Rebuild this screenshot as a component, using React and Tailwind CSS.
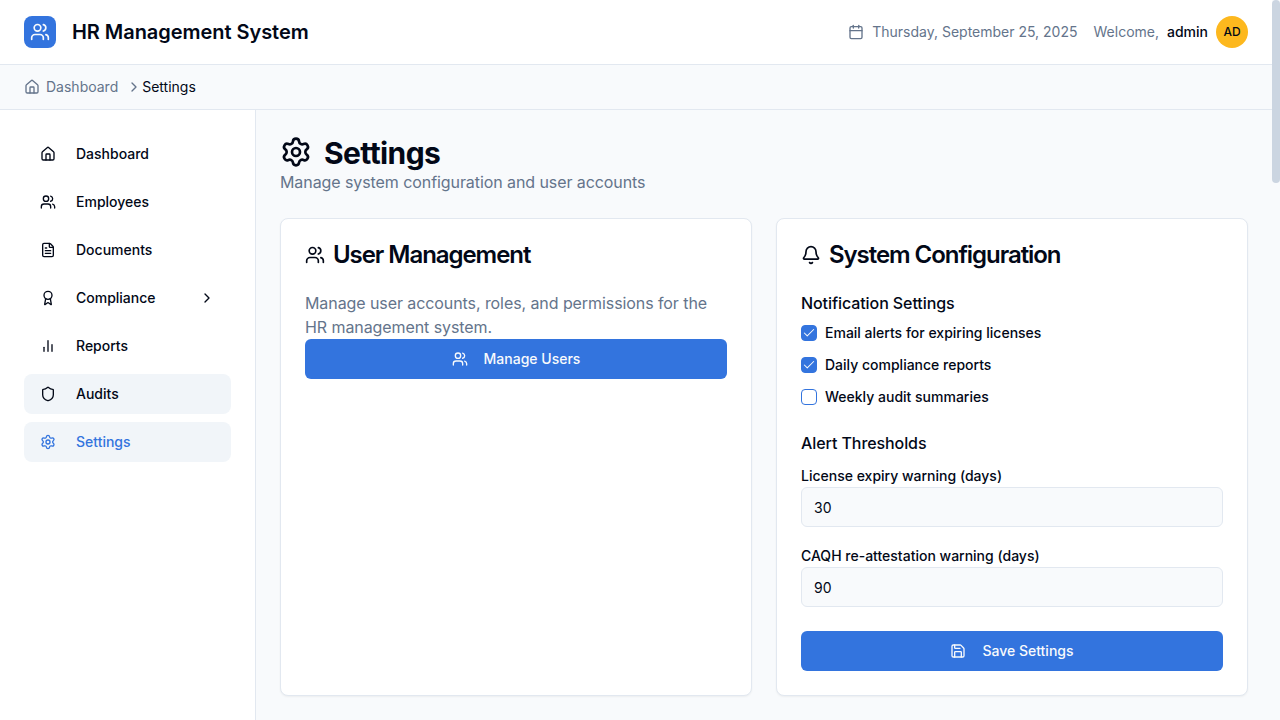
import { Users, House, Calendar, Settings, FileText, Award, Shield, Bell, Save, ChevronRight, Check } from 'lucide-react'

// lucide's current chart icon is wider than the one in the picture
function BarsIcon({ className }) {
  return (
    <svg viewBox="0 0 24 24" fill="none" stroke="currentColor" strokeWidth="2" strokeLinecap="round" strokeLinejoin="round" className={className}>
      <path d="M18 20V10" />
      <path d="M12 20V4" />
      <path d="M6 20v-6" />
    </svg>
  )
}

const navItems = [
  { label: 'Dashboard', icon: House },
  { label: 'Employees', icon: Users },
  { label: 'Documents', icon: FileText },
  { label: 'Compliance', icon: Award, hasChildren: true },
  { label: 'Reports', icon: BarsIcon },
  { label: 'Audits', icon: Shield, hovered: true },
  { label: 'Settings', icon: Settings, active: true },
]

const notifications = [
  { label: 'Email alerts for expiring licenses', checked: true },
  { label: 'Daily compliance reports', checked: true },
  { label: 'Weekly audit summaries', checked: false },
]

function NavItem({ item }) {
  const Icon = item.icon
  return (
    <a
      className={`flex h-10 items-center gap-5 rounded-lg px-4 text-sm font-medium ${
        item.active ? 'bg-[#f1f5f9] text-[#3374de]' : item.hovered ? 'bg-[#f1f5f9] text-[#020817]' : 'text-[#020817]'
      }`}
    >
      <Icon className="h-4 w-4 shrink-0" />
      <span className="flex-1">{item.label}</span>
      {item.hasChildren && <ChevronRight className="h-4 w-4 shrink-0" />}
    </a>
  )
}

function CheckRow({ label, checked }) {
  return (
    <label className="flex h-5 items-center gap-2 text-sm font-medium text-[#020817]">
      <span
        className={`flex h-4 w-4 items-center justify-center rounded border border-[#3374de] ${
          checked ? 'bg-[#3374de] text-[#f8fafc]' : 'bg-white'
        }`}
      >
        {checked && <Check className="h-3.5 w-3.5 shrink-0" strokeWidth={1.75} />}
      </span>
      {label}
    </label>
  )
}

function NumberField({ label, value }) {
  return (
    <div>
      <div className="pt-px text-sm font-medium leading-5 text-[#020817]">{label}</div>
      <input
        readOnly
        value={value}
        className="mt-px h-10 w-full rounded-md border border-[#e2e8f0] bg-[#f8fafc] px-3 text-sm text-[#020817] outline-none"
      />
    </div>
  )
}

export default function App() {
  return (
    <div className="relative h-screen overflow-hidden bg-[#f8fafc] font-['Inter',sans-serif]">
      {/* scrollbar thumb, headless run hides the real one */}
      <div className="absolute top-0 right-0 h-[183px] w-2 rounded-full bg-[#cbd5e1]" />
      <div className="mr-2">
        <header className="flex h-[65px] items-center justify-between border-b border-[#e2e8f0] bg-white px-6">
          <div className="flex items-center gap-4">
            <div className="flex h-8 w-8 items-center justify-center rounded-lg bg-[#3374de] text-[#f8fafc]">
              <Users className="h-5 w-5" />
            </div>
            <h1 className="text-xl font-semibold tracking-[-0.05px] text-[#020817]">HR Management System</h1>
          </div>
          <div className="flex items-center gap-2 text-sm">
            <Calendar className="h-4 w-4 text-[#64748b]" />
            <span className="text-[#64748b]">Thursday, September 25, 2025</span>
            <span className="ml-2 text-[#64748b]">Welcome,</span>
            <span className="font-medium text-[#020817]">admin</span>
            <div className="flex h-8 w-8 items-center justify-center rounded-full bg-[#fdb81e] text-xs font-medium text-[#020817]">
              AD
            </div>
          </div>
        </header>

        <nav className="flex h-[45px] items-center border-b border-[#e2e8f0] bg-[#f8fafc] px-6 text-sm">
          <House className="h-4 w-4 text-[#64748b]" />
          <span className="ml-1.5 text-[#64748b]">Dashboard</span>
          <ChevronRight className="ml-2 h-4 w-4 text-[#64748b]" />
          <span className="text-[#020817]">Settings</span>
        </nav>

        <div className="flex">
          <aside className="min-h-[610px] w-64 shrink-0 border-r border-[#e2e8f0] bg-white p-6">
            <div className="flex flex-col gap-2">
              {navItems.map((item) => (
                <NavItem key={item.label} item={item} />
              ))}
            </div>
          </aside>

          <main className="flex-1 p-6">
            <div className="flex h-9 items-center gap-3">
              <Settings className="h-8 w-8 text-[#020817]" />
              <h2 className="h-9 text-3xl leading-[38px] font-bold tracking-[-0.02em] text-[#020817]">Settings</h2>
            </div>
            <p className="text-base tracking-[-0.08px] text-[#64748b]">Manage system configuration and user accounts</p>

            <div className="mt-6 grid grid-cols-2 gap-6">
              <section className="rounded-lg border border-[#e2e8f0] bg-white p-6 shadow-xs">
                <h3 className="flex items-center gap-2 text-2xl leading-6 font-semibold tracking-[-0.044em] text-[#020817]">
                  <Users className="h-5 w-5" />
                  User Management
                </h3>
                <p className="mt-6 text-base tracking-[-0.08px] text-[#64748b]">
                  Manage user accounts, roles, and permissions for the HR management system.
                </p>
                <button className="flex h-10 w-full items-center justify-center gap-4 rounded-md bg-[#3374de] text-sm font-medium text-[#f8fafc]">
                  <Users className="h-4 w-4" />
                  Manage Users
                </button>
              </section>

              <section className="rounded-lg border border-[#e2e8f0] bg-white p-6 shadow-xs">
                <h3 className="flex items-center gap-2 text-2xl leading-6 font-semibold tracking-[-0.044em] text-[#020817]">
                  <Bell className="h-5 w-5" />
                  System Configuration
                </h3>
                <h4 className="mt-6 text-base font-medium tracking-[-0.08px] text-[#020817]">Notification Settings</h4>
                <div className="mt-2 flex flex-col gap-3">
                  {notifications.map((n) => (
                    <CheckRow key={n.label} label={n.label} checked={n.checked} />
                  ))}
                </div>
                <h4 className="mt-6 text-base font-medium tracking-[-0.08px] text-[#020817]">Alert Thresholds</h4>
                <div className="mt-2.5 flex flex-col gap-[18px]">
                  <NumberField label="License expiry warning (days)" value="30" />
                  <NumberField label="CAQH re-attestation warning (days)" value="90" />
                </div>
                <button className="mt-6 flex h-10 w-full items-center justify-center gap-4 rounded-md bg-[#3374de] text-sm font-medium text-[#f8fafc]">
                  <Save className="h-4 w-4" />
                  Save Settings
                </button>
              </section>
            </div>
          </main>
        </div>
      </div>
    </div>
  )
}
